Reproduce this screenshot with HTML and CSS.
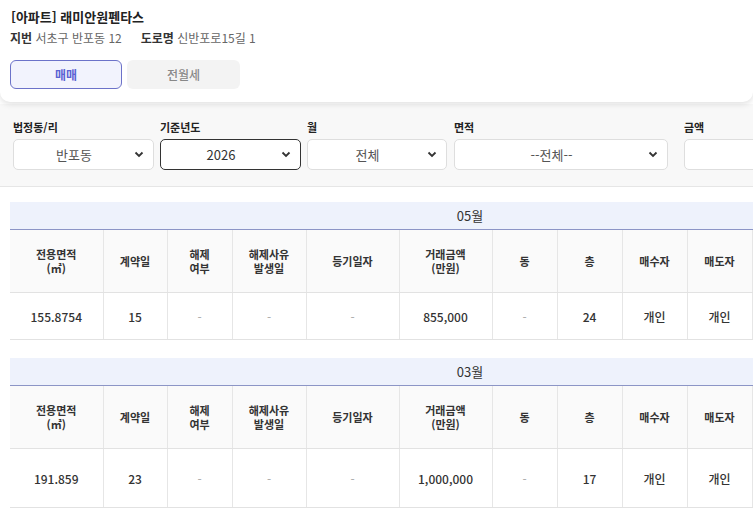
FILE: index.html
```html
<!DOCTYPE html>
<html lang="ko">
<head>
    <meta charset="UTF-8">
    <meta name="viewport" content="width=device-width, initial-scale=1.0">
    <title>실거래가</title>
    <link rel="stylesheet" href="styles.css">
</head>
<body>
    <!-- Apartment info -->
    <div class="info-card">
        <div class="apt-title">[아파트] 래미안원펜타스</div>
        <div class="apt-address">
            <span><b>지번</b> 서초구 반포동 12</span>
            <span><b>도로명</b> 신반포로15길 1</span>
        </div>
        <div class="tabs">
            <button class="tab active">매매</button>
            <button class="tab">전월세</button>
        </div>
    </div>

    <!-- Filters -->
    <div class="filter-bar">
        <div class="filter f-dong">
            <label>법정동/리</label>
            <div class="select">
                <span>반포동</span>
                <svg width="10" height="7" viewBox="0 0 10 7"><path d="M1.5 1.5 L5 5 L8.5 1.5" fill="none" stroke="#333" stroke-width="1.8"/></svg>
            </div>
        </div>
        <div class="filter f-year">
            <label>기준년도</label>
            <div class="select focused">
                <span>2026</span>
                <svg width="10" height="7" viewBox="0 0 10 7"><path d="M1.5 1.5 L5 5 L8.5 1.5" fill="none" stroke="#333" stroke-width="1.8"/></svg>
            </div>
        </div>
        <div class="filter f-month">
            <label>월</label>
            <div class="select">
                <span>전체</span>
                <svg width="10" height="7" viewBox="0 0 10 7"><path d="M1.5 1.5 L5 5 L8.5 1.5" fill="none" stroke="#333" stroke-width="1.8"/></svg>
            </div>
        </div>
        <div class="filter f-area">
            <label>면적</label>
            <div class="select">
                <span>--전체--</span>
                <svg width="10" height="7" viewBox="0 0 10 7"><path d="M1.5 1.5 L5 5 L8.5 1.5" fill="none" stroke="#333" stroke-width="1.8"/></svg>
            </div>
        </div>
        <div class="filter f-price">
            <label>금액</label>
            <div class="text-input"></div>
        </div>
    </div>

    <!-- Deals by month -->
    <div class="deals">
        <table class="deal-table">
            <colgroup>
                <col class="c-93"><col class="c-64"><col class="c-65"><col class="c-74">
                <col class="c-93"><col class="c-93"><col class="c-65"><col class="c-65">
                <col class="c-65"><col class="c-65"><col class="c-65"><col class="c-113">
            </colgroup>
            <tr><th class="month" colspan="12">05월</th></tr>
            <tr class="head">
                <th>전용면적<br>(㎡)</th><th>계약일</th><th>해제<br>여부</th><th>해제사유<br>발생일</th><th>등기일자</th>
                <th>거래금액<br>(만원)</th><th>동</th><th>층</th><th>매수자</th><th>매도자</th><th>거래유형</th><th>중개사</th>
            </tr>
            <tr class="row">
                <td>155.8754</td><td>15</td><td class="empty">-</td><td class="empty">-</td><td class="empty">-</td>
                <td>855,000</td><td class="empty">-</td><td>24</td><td>개인</td><td>개인</td><td>중개</td><td>서초구</td>
            </tr>
        </table>

        <table class="deal-table">
            <colgroup>
                <col class="c-93"><col class="c-64"><col class="c-65"><col class="c-74">
                <col class="c-93"><col class="c-93"><col class="c-65"><col class="c-65">
                <col class="c-65"><col class="c-65"><col class="c-65"><col class="c-113">
            </colgroup>
            <tr><th class="month" colspan="12">03월</th></tr>
            <tr class="head">
                <th>전용면적<br>(㎡)</th><th>계약일</th><th>해제<br>여부</th><th>해제사유<br>발생일</th><th>등기일자</th>
                <th>거래금액<br>(만원)</th><th>동</th><th>층</th><th>매수자</th><th>매도자</th><th>거래유형</th><th>중개사</th>
            </tr>
            <tr class="row tall">
                <td>191.859</td><td>23</td><td class="empty">-</td><td class="empty">-</td><td class="empty">-</td>
                <td>1,000,000</td><td class="empty">-</td><td>17</td><td>개인</td><td>개인</td><td>중개</td><td>서초구,<br>강남구</td>
            </tr>
        </table>
    </div>
</body>
</html>
```

FILE: styles.css
```css
html {
    overflow-x: hidden;
}
body {
    margin: 0;
    font-family: "Noto Sans CJK KR", "Noto Sans", sans-serif;
    color: #333;
    background-color: #fff;
}
.info-card {
    background-color: #fff;
    padding: 7px 10px 13px;
    border-radius: 0 0 10px 10px;
    box-shadow: 0 2px 6px rgba(0, 0, 0, 0.13);
    position: relative;
    z-index: 1;
}
.apt-title {
    font-size: 13px;
    font-weight: bold;
    color: #222;
    line-height: 20px;
    padding-left: 1px;
}
.apt-address {
    font-size: 12px;
    color: #666;
    line-height: 20px;
    margin-top: 1px;
    display: flex;
    gap: 19px;
}
.apt-address b {
    color: #333;
}
.tabs {
    display: flex;
    gap: 5px;
    margin-top: 12px;
}
.tab {
    width: 113px;
    height: 29px;
    border: none;
    border-radius: 6px;
    background-color: #f3f3f3;
    color: #888;
    font-family: inherit;
    font-size: 12px;
    font-weight: 500;
    padding: 0;
}
.tab.active {
    width: 112px;
    background-color: #f2f3fd;
    border: 1px solid #6c72c9;
    color: #5b63d3;
    font-weight: bold;
}
.filter-bar {
    background-color: #f8f8f8;
    border-bottom: 1px solid #e6e6e6;
    margin-top: 2px;
    padding: 15px 13px 16px;
    display: flex;
    gap: 6px;
}
.filter {
    flex-shrink: 0;
}
.filter label {
    display: block;
    font-size: 11px;
    font-weight: bold;
    color: #222;
    line-height: 16px;
    margin-bottom: 4px;
}
.select, .text-input {
    height: 29px;
    background-color: #fff;
    border: 1px solid #dedede;
    border-radius: 5px;
    display: flex;
    align-items: center;
    padding: 0 9px 0 0;
    font-size: 13px;
    color: #555;
}
.select span {
    flex: 1;
    text-align: center;
}
.select.focused {
    border-color: #333;
    color: #333;
}
.f-dong, .f-year {
    width: 141px;
}
.f-month {
    width: 140px;
}
.f-area {
    width: 214px;
    margin-left: 1px;
}
.f-price {
    width: 120px;
    margin-left: 10px;
}
.deals {
    padding: 15px 10px 0;
}
.deal-table {
    width: 920px;
    table-layout: fixed;
    border-collapse: collapse;
    margin-bottom: 18px;
}
.c-64 { width: 64px; }
.c-65 { width: 65px; }
.c-74 { width: 74px; }
.c-93 { width: 93px; }
.c-113 { width: 113px; }
.deal-table th, .deal-table td {
    text-align: center;
    border-right: 1px solid #e6e6e6;
    border-bottom: 1px solid #e2e2e2;
    padding: 0 4px;
}
.deal-table .month {
    height: 27px;
    background-color: #eef2fc;
    border-bottom: 1px solid #8c95c6;
    border-right: none;
    font-size: 13px;
    font-weight: normal;
    color: #333;
}
.head th {
    height: 62px;
    background-color: #fafafa;
    font-size: 11px;
    font-weight: bold;
    color: #333;
    line-height: 14px;
}
.row td {
    height: 46px;
    font-size: 12px;
    font-weight: 500;
    color: #333;
    line-height: 15px;
}
.row.tall td {
    height: 58px;
}
.row td.empty {
    color: #aaa;
    font-weight: normal;
}
```
